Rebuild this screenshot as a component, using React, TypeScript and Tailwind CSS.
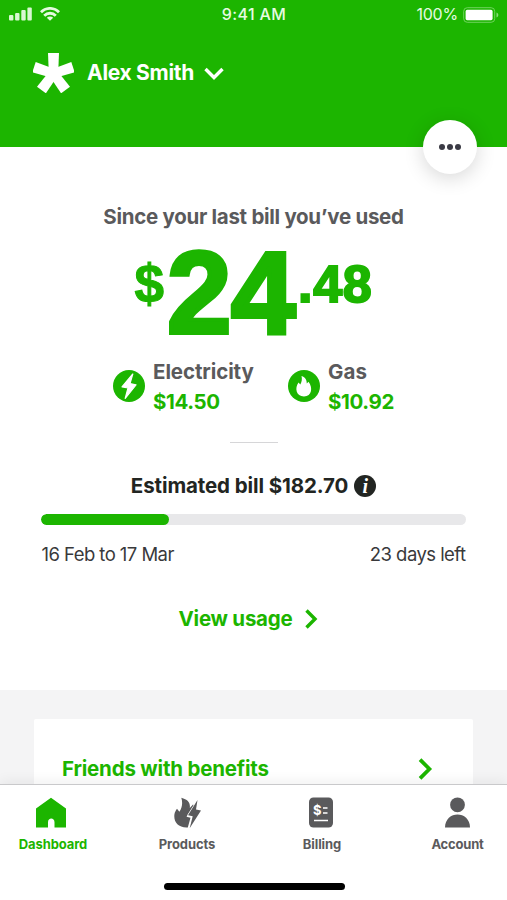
import React from "react";

const Chevron = ({ className, d }: { className: string; d: string }) => (
  <svg className={className} viewBox="0 0 20 20" fill="none" stroke="currentColor" strokeWidth="3.4">
    <path d={d} />
  </svg>
);

function StatusBar() {
  return (
    <div className="flex h-[28px] items-center justify-between pr-[8px] pl-[9px] text-white">
      <div className="flex w-[150px] items-center gap-[8px]">
        <svg className="h-[14px] w-[23px]" viewBox="0 0 23 14" fill="#d9f8d2">
          <rect x="0" y="8" width="4.4" height="5.5" rx="1" />
          <rect x="6.1" y="6" width="4.4" height="7.5" rx="1" />
          <rect x="12.3" y="3" width="4.4" height="10.5" rx="1" />
          <rect x="18.4" y="0.5" width="4.4" height="13" rx="1" />
        </svg>
        <svg className="h-[14px] w-[20px]" viewBox="0 0 20 14" fill="none" stroke="#e4fbdf" strokeWidth="2.8">
          <path d="M1 5.2C6 .1 14 .1 19 5.2" />
          <path d="M4.2 8.7c3.200-3.300 8.400-3.300 11.600 0" />
          <path d="M6.800 10.7c1.900-1.700 4.500-1.700 6.400 0L10 13.800z" fill="#e4fbdf" stroke="none" />
        </svg>
      </div>
      <span className="text-[16px] font-medium tracking-[0.35px] text-[#e6fbe2]">9:41 AM</span>
      <div className="flex w-[150px] items-center justify-end gap-[5px]">
        <span className="text-[16px] tracking-[-0.2px] text-[#e6fbe2]">100%</span>
        <svg className="mt-px h-[16px] w-[36px]" viewBox="0 0 36 16" fill="none">
          <rect x="0.7" y="0.7" width="31" height="14.6" rx="3.6" stroke="#6fd35d" />
          <rect x="2.6" y="2.800" width="27" height="10.4" rx="1.6" fill="#fff" />
          <path d="M33.500 5.500c2.400 1 2.400 4 0 5z" fill="#8bdc7c" />
        </svg>
      </div>
    </div>
  );
}

function Header() {
  return (
    <header className="relative z-10 h-[147px] shrink-0 bg-[#1cb500]">
      <StatusBar />
      <div className="flex h-[89px] items-center pl-[33px] text-white">
        <svg className="h-[41px] w-[41px]" viewBox="0 0 41 41" fill="#fff">
          <path d="M15 1h11l-.8 20h-9.400z" />
          <path d="M15 1h11l-.8 20h-9.400z" transform="rotate(72 20.500 21.500)" />
          <path d="M15 1h11l-.8 20h-9.400z" transform="rotate(144 20.500 21.500)" />
          <path d="M15 1h11l-.8 20h-9.400z" transform="rotate(216 20.500 21.500)" />
          <path d="M15 1h11l-.8 20h-9.400z" transform="rotate(288 20.500 21.500)" />
          <circle cx="20.500" cy="21.500" r="7" />
        </svg>
        <span className="ml-[13px] text-[21px] font-bold tracking-[-0.3px]">Alex Smith</span>
        <Chevron className="ml-[10px] h-[20px] w-[20px]" d="M1.500 6 10 14.500l8.500-8.500" />
      </div>
      <button className="absolute top-[120px] right-[30px] flex h-[54px] w-[54px] items-center justify-center gap-[2.500px] rounded-full bg-white shadow-[0_4px_20px_rgba(0,0,0,0.16)]">
        <i className="size-[5.500px] rounded-full bg-[#3b3b45]" />
        <i className="size-[5.500px] rounded-full bg-[#3b3b45]" />
        <i className="size-[5.500px] rounded-full bg-[#3b3b45]" />
      </button>
    </header>
  );
}

function Usage() {
  return (
    <section className="flex h-[543px] shrink-0 flex-col items-center bg-white">
      <h1 className="mt-[55px] h-[30px] text-[20.500px] leading-[30px] font-bold tracking-[-0.29px] whitespace-nowrap text-[#5a5a5c]">
        Since your last bill you’ve used
      </h1>
      <div className="mt-[11px] flex h-[100px] items-start font-['Liberation_Sans',sans-serif] font-bold text-[#1cb500]">
        <span className="mt-[11px] mr-[3px] text-[53px] leading-[60px] [-webkit-text-stroke:1px_#1cb500]">$</span>
        <span className="text-[116px] leading-[100px] tracking-[-0.500px] [-webkit-text-stroke:4px_#1cb500]">24</span>
        <span className="mt-[11px] ml-[3px] text-[52px] leading-[60px] tracking-[0.700px] [-webkit-text-stroke:2px_#1cb500]">.48</span>
      </div>
      <div className="mt-[14px] flex h-[60px] items-center text-[20.500px] leading-[30px] font-bold">
        <svg className="-mt-[3px] h-[32px] w-[32px]" viewBox="0 0 32 32">
          <circle cx="16" cy="16" r="16" fill="#1cb500" />
          <path d="M19.800 4 9 16.800l6 1.200L12.200 28.500 23 14.800l-6-1.200z" fill="#fff" stroke="#fff" strokeWidth="1.200" strokeLinejoin="round" />
        </svg>
        <div className="ml-[8px] w-[135px]">
          <div className="tracking-[-0.1px] text-[#5a5a5c]">Electricity</div>
          <div className="tracking-[-0.4px] text-[#1cb500]">$14.50</div>
        </div>
        <svg className="-mt-[3px] h-[32px] w-[32px]" viewBox="0 0 32 32">
          <circle cx="16" cy="16" r="16" fill="#1cb500" />
          <path d="M13.500 6c4 1.500 5.300 4 5.300 7.500l1.700-1.700c4.500 5.700 3.500 14.700-4.500 14.700S6.500 18 10.500 12.500l1.800 2C13.800 12 14.300 9 13.500 6z" fill="#fff" />
        </svg>
        <div className="ml-[8px]">
          <div className="tracking-[0.1px] text-[#5a5a5c]">Gas</div>
          <div className="tracking-[-0.4px] text-[#1cb500]">$10.92</div>
        </div>
      </div>
      <div className="mt-[25px] h-px w-[48px] bg-[#d6d6d8]" />
      <div className="mt-[28px] flex h-[30px] items-center gap-[6px] text-[#222522]">
        <span className="text-[20.500px] font-bold tracking-[-0.1px]">Estimated bill $182.70</span>
        <span className="flex size-[22px] items-center justify-center rounded-full bg-[#222522] font-['Liberation_Serif',serif] text-[20px] leading-[20px] font-bold text-white italic">i</span>
      </div>
      <div className="mt-[13px] h-[11px] w-[425px] overflow-hidden rounded-full bg-[#e8e8ea]">
        <div className="h-full w-[128px] rounded-full bg-[#1cb500]" />
      </div>
      <div className="mt-[15px] flex h-[30px] w-[424px] items-center justify-between text-[18.500px] tracking-[-0.55px] text-[#39393b]">
        <span>16 Feb to 17 Mar</span>
        <span>23 days left</span>
      </div>
      <div className="mt-[34px] -ml-[7px] flex h-[30px] items-center gap-[9px] text-[#1cb500]">
        <span className="text-[20.500px] font-bold tracking-[-0.25px]">View usage</span>
        <Chevron className="h-[20px] w-[20px]" d="M5.500 1.500 14 10l-8.500 8.500" />
      </div>
    </section>
  );
}

function Nav() {
  const base = "flex shrink-0 flex-col items-center pt-[12px] text-[13px] font-bold tracking-[-0.1px]";
  return (
    <nav className="relative z-10 h-[116px] border-t border-[#c9c9cb] bg-white shadow-[0_-3px_12px_rgba(0,0,0,0.06)]">
      <div className="flex h-[98px]">
        <div className={base + " w-[106px] text-[#1cb500]"}>
          <svg className="-ml-[4px] h-[31px] w-[30px]" viewBox="0 0 30 31" fill="currentColor">
            <path d="M15 .8 30 11.500v19H18.500v-5.300c0-5-6.500-5-6.500 0v5.300H0v-19z" />
          </svg>
          <span className="mt-[6px] leading-[20px]">Dashboard</span>
        </div>
        <div className={base + " w-[162px] text-[#5a5a5c]"}>
          <svg className="h-[31px] w-[27px]" viewBox="0 0 27 31" fill="currentColor">
            <path d="M7.300.800C14 2.500 16.500 6 15.800 11L19 7.500l1 1L12.500 19.800l4 .9L13.800 30.500C4 31-.5 25 .4 17.500c.4-2.500 1.300-4 2.600-5.800l2.400 3C8.300 10.500 8.800 5.500 7.300.800z" />
            <path d="M23.500 3 14 18.200l4.700 1L15.700 31.200 27 13.500l-5-1z" stroke="#fff" strokeWidth="1.200" paintOrder="stroke" />
          </svg>
          <span className="mt-[6px] leading-[20px]">Products</span>
        </div>
        <div className={base + " w-[108px] text-[#5a5a5c]"}>
          <svg className="-ml-[2px] h-[31px] w-[24px]" viewBox="0 0 24 31">
            <rect y="0.500" width="24" height="30" rx="4.500" fill="currentColor" />
            <path d="M14 11h4.500M14 16h4.500M5 23.500h14" stroke="#fff" strokeWidth="1.600" />
            <text x="4" y="18" fill="#fff" fontSize="13" fontWeight="700">$</text>
          </svg>
          <span className="mt-[6px] leading-[20px]">Billing</span>
        </div>
        <div className={base + " ml-[32px] w-[99px] text-[#5a5a5c]"}>
          <svg className="h-[31px] w-[25px]" viewBox="0 0 25 31" fill="currentColor">
            <circle cx="12.500" cy="7.800" r="7.400" />
            <path d="M0 30.500C0 13 25 13 25 30.500z" />
          </svg>
          <span className="mt-[6px] leading-[20px] tracking-[-0.2px]">Account</span>
        </div>
      </div>
      <div className="ml-[164px] h-[7px] w-[181px] rounded-full bg-black" />
    </nav>
  );
}

export default function App() {
  return (
    <div className="flex h-[900px] w-[507px] flex-col overflow-hidden bg-white font-['Inter',sans-serif]">
      <Header />
      <Usage />
      <section className="h-[94px] shrink-0 overflow-hidden bg-[#f4f4f5] px-[34px] pt-[29px]">
        <div className="flex h-[99px] items-center justify-between rounded-[2px] bg-white pr-[37px] pl-[28px] text-[#1cb500]">
          <span className="pt-[1px] text-[20.500px] font-bold tracking-[-0.2px]">Friends with benefits</span>
          <Chevron className="h-[22px] w-[22px]" d="M5.500 1.500 14 10l-8.500 8.500" />
        </div>
      </section>
      <Nav />
    </div>
  );
}
